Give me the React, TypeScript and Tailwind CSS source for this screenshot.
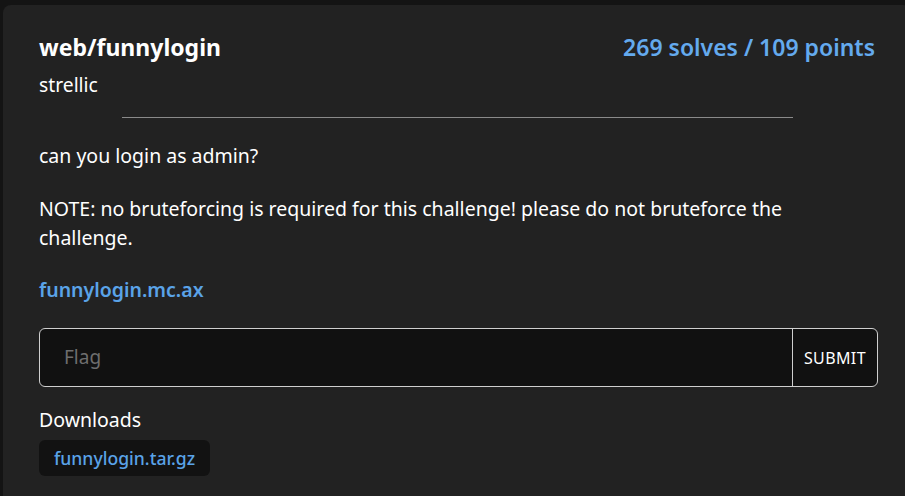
export default function App() {
  return (
    <div
      className="h-[496px] w-[905px] overflow-hidden bg-[#141414] pl-[3px] pt-[5px] text-white"
      style={{ fontFamily: '"Noto Sans", "Open Sans", sans-serif' }}
    >
      <div className="min-h-[500px] w-[908px] rounded-t-lg bg-[#222222] px-9 pt-[26px] pb-8">
        {/* Header */}
        <div className="flex items-start justify-between">
          <div>
            <h1 className="text-[23px] font-bold leading-[32px]">web/funnylogin</h1>
            <p className="mt-[8px] text-[19.3px] leading-[28px]">strellic</p>
          </div>
          <div className="text-[23px] font-semibold leading-[32px] text-[#64aaee]">
            269 solves / 109 points
          </div>
        </div>

        <hr className="mx-auto mt-[18px] w-[671px] border-t border-[#8a8a8a]" />

        {/* Description */}
        <div className="mt-[23px] text-[19.5px] leading-[29px]">
          <p>can you login as admin?</p>
          <p className="mt-[24px]">
            NOTE: no bruteforcing is required for this challenge! please do not bruteforce the challenge.
          </p>
          <p className="mt-[23px]">
            <a className="font-semibold text-[#5aa3e8]">funnylogin.mc.ax</a>
          </p>
        </div>

        {/* Flag form */}
        <div className="mt-[24px] flex h-[59px] w-[839px] rounded-md border border-[#cfcfcf] bg-[#111111]">
          <input
            className="flex-1 bg-transparent px-6 text-[19px] text-white outline-none placeholder:text-[#6e6e6e]"
            placeholder="Flag"
          />
          <button className="border-l border-[#cfcfcf] px-[11px] text-[16px] tracking-wide">SUBMIT</button>
        </div>

        {/* Downloads */}
        <div className="mt-[19px]">
          <p className="text-[19.5px] leading-[28px]">Downloads</p>
          <div className="mt-[6px] flex">
            <a className="flex h-[36px] items-center rounded-md bg-[#121212] px-[15px] text-[17.6px] font-medium text-[#5aa3e8]">
              funnylogin.tar.gz
            </a>
          </div>
        </div>
      </div>
    </div>
  );
}
